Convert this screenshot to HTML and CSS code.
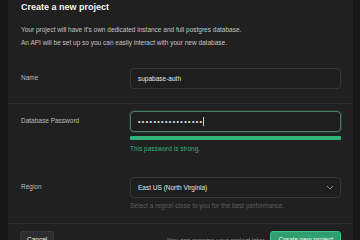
FILE: index.html
```html
<!DOCTYPE html>
<html lang="en">
<head>
  <meta charset="UTF-8" />
  <title>Create a new project</title>
  <link rel="stylesheet" href="styles.css">
</head>
<body>
  <div class="modal">
    <div class="modal-header">
      <h1 class="title">Create a new project</h1>
      <p class="intro">
        Your project will have it's own dedicated instance and full postgres database.<br>
        An API will be set up so you can easily interact with your new database.
      </p>
    </div>

    <div class="section">
      <label class="field-label">Name</label>
      <div class="field">
        <div class="input">supabase-auth</div>
      </div>
    </div>

    <div class="section section-bordered section-password">
      <label class="field-label">Database Password</label>
      <div class="field">
        <div class="input input-focus"><span class="dots">&bull;&bull;&bull;&bull;&bull;&bull;&bull;&bull;&bull;&bull;&bull;&bull;&bull;&bull;&bull;&bull;&bull;</span><span class="caret"></span></div>
        <div class="strength"></div>
        <p class="strength-text">This password is strong.</p>
      </div>
    </div>

    <div class="section section-region">
      <label class="field-label">Region</label>
      <div class="field">
        <div class="input select">
          <span>East US (North Virginia)</span>
          <svg class="chevron" width="8" height="5" viewBox="0 0 8 5"><path d="M1 1l3 3 3-3" fill="none" stroke="#8a8a8a" stroke-width="1" /></svg>
        </div>
        <p class="help">Select a region close to you for the best performance.</p>
      </div>
    </div>

    <div class="footer">
      <button class="btn btn-cancel">Cancel</button>
      <div class="footer-right">
        <span class="footer-note">You can rename your project later</span>
        <button class="btn btn-primary">Create new project</button>
      </div>
    </div>
  </div>
</body>
</html>
```

FILE: styles.css
```css
body {
  margin: 0;
  background-color: #171717;
  font-family: 'Liberation Sans', Arial, sans-serif;
  color: #ededed;
  overflow: hidden;
}

.modal {
  margin-left: 8px;
  width: 345px;
  min-height: 100vh;
  background-color: #202020;
}

.modal-header {
  height: 60px;
  box-sizing: border-box;
  padding: 1px 13px 0;
}

.title {
  margin: 0;
  font-size: 9px;
  line-height: 12px;
  font-weight: bold;
  color: #f2f2f2;
}

.intro {
  margin: 10px 0 0;
  font-size: 6.5px;
  line-height: 13px;
  color: #c4c4c4;
}

.section {
  display: grid;
  grid-template-columns: 109px 1fr;
  padding: 8px 12px 14px 13px;
}

.section-bordered {
  border-top: 1px solid #2c2c2c;
  padding-top: 7px;
}

.section-password {
  padding-bottom: 15px;
}

.section-region {
  padding-bottom: 12px;
}

.field-label {
  padding-top: 4px;
  font-size: 6.5px;
  line-height: 11px;
  color: #bcbcbc;
}

.input {
  height: 21px;
  box-sizing: border-box;
  display: flex;
  align-items: center;
  padding: 0 7px;
  border: 1px solid #363636;
  border-radius: 4px;
  background-color: #1e1e1e;
  font-size: 6.5px;
  color: #e4e4e4;
}

.input-focus {
  border-color: #4f7d66;
  box-shadow: 0 0 0 1px #263a30;
}

.dots {
  letter-spacing: 1.4px;
  font-size: 7px;
}

.caret {
  width: 1px;
  height: 9px;
  background-color: #d0d0d0;
}

.strength {
  margin-top: 4px;
  height: 4px;
  border-radius: 1px;
  background-color: #2eb37b;
}

.strength-text {
  margin: 4px 0 0;
  font-size: 6.5px;
  line-height: 10px;
  color: #34b27b;
}

.select {
  justify-content: space-between;
  padding-right: 6px;
}

.help {
  margin: 3px 0 0;
  font-size: 6.5px;
  line-height: 10px;
  color: #5e5e5e;
}

.footer {
  display: flex;
  justify-content: space-between;
  align-items: flex-start;
  border-top: 1px solid #2c2c2c;
  padding: 7px 12px 0;
}

.footer-right {
  display: flex;
  align-items: center;
  gap: 6px;
}

.footer-note {
  font-size: 6.5px;
  color: #8c8c8c;
}

.btn {
  height: 18px;
  padding: 0 6px;
  border-radius: 3px;
  font-family: 'Liberation Sans', Arial, sans-serif;
  font-size: 6.5px;
  line-height: 16px;
}

.btn-cancel {
  background-color: #2e2e2e;
  border: 1px solid #383838;
  color: #ededed;
}

.btn-primary {
  padding: 0 7px;
  background-color: #2f9f6f;
  border: 1px solid #3fbf87;
  color: #f4f4f4;
}
```
